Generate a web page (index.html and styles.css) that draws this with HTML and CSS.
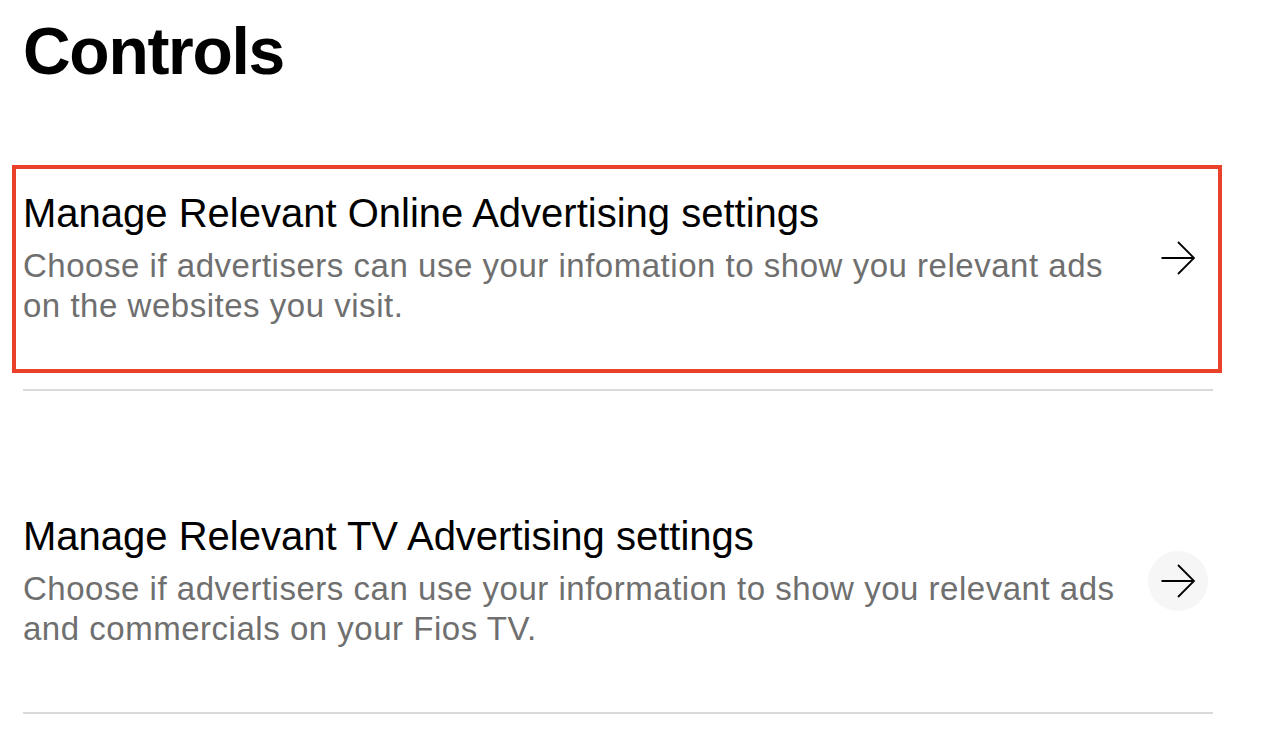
FILE: index.html
```html
<!DOCTYPE html>
<html lang="en">
<head>
    <meta charset="UTF-8">
    <meta name="viewport" content="width=device-width, initial-scale=1.0">
    <title>Controls</title>
    <link rel="stylesheet" href="styles.css">
</head>
<body>
    <div class="page">
        <h1 class="page-title">Controls</h1>

        <!-- Privacy controls list -->
        <ul class="control-list">
            <li class="control-row">
                <a href="#" class="control-link is-active">
                    <div class="control-text">
                        <h2 class="control-title">Manage Relevant Online Advertising settings</h2>
                        <p class="control-desc">Choose if advertisers can use your infomation to show you relevant ads on the websites you visit.</p>
                    </div>
                    <span class="control-arrow">
                        <svg width="34" height="34" viewBox="0 0 34 34" fill="none" stroke="#000" stroke-width="1.8">
                            <path d="M0.5 17H33"/>
                            <path d="M17 1L33 17L17 33"/>
                        </svg>
                    </span>
                </a>
            </li>
            <li class="control-row">
                <a href="#" class="control-link">
                    <div class="control-text">
                        <h2 class="control-title">Manage Relevant TV Advertising settings</h2>
                        <p class="control-desc">Choose if advertisers can use your information to show you relevant ads and commercials on your Fios TV.</p>
                    </div>
                    <span class="control-arrow hover">
                        <svg width="34" height="34" viewBox="0 0 34 34" fill="none" stroke="#000" stroke-width="1.8">
                            <path d="M0.5 17H33"/>
                            <path d="M17 1L33 17L17 33"/>
                        </svg>
                    </span>
                </a>
            </li>
        </ul>
    </div>
</body>
</html>
```

FILE: styles.css
```css
* {
    margin: 0;
    padding: 0;
    box-sizing: border-box;
}

body {
    background: #fff;
    color: #000;
    font-family: 'Liberation Sans', Arial, Helvetica, sans-serif;
}

.page {
    padding: 18px 51px 0 23px;
}

.page-title {
    font-size: 66px;
    line-height: 1;
    font-weight: 700;
    letter-spacing: -1.3px;
    margin-bottom: 90px;
}

/* Controls list */
.control-list {
    list-style: none;
}

.control-row {
    border-bottom: 2px solid #d8dada;
    padding-bottom: 25px;
}

.control-row + .control-row {
    padding-top: 106px;
}

.control-link {
    display: flex;
    align-items: center;
    gap: 18px;
    margin-left: -2px;
    padding: 15px 5px 38px 2px;
    color: inherit;
    text-decoration: none;
}

.control-link.is-active {
    outline: 4px solid #e9412a;
    outline-offset: 5px;
}

.control-text {
    flex: 1;
}

.control-title {
    font-size: 40px;
    line-height: 48px;
    font-weight: 400;
    margin-bottom: 9px;
}

.control-desc {
    font-size: 33px;
    line-height: 40px;
    letter-spacing: 0.52px;
    color: #6f6f6f;
}

.control-arrow {
    flex: none;
    width: 60px;
    height: 60px;
    border-radius: 50%;
    display: flex;
    align-items: center;
    justify-content: center;
}

.control-arrow.hover {
    background: #f6f6f6;
}
```
